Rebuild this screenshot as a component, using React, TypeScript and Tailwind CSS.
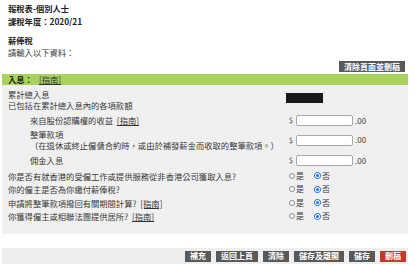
import React from "react";

const font = { fontFamily: '"Noto Sans CJK TC", "Noto Sans", sans-serif' };

function Guide() {
  return <span className="underline text-[#333]">[指南]</span>;
}

function Money() {
  return (
    <div className="flex items-center">
      <span className="w-[7px] text-[7px] leading-none">$</span>
      <div className="w-[57px] h-[11px] bg-white border border-[#a8a8a8] rounded-[2px]" />
      <span className="ml-[2px] text-[8px] leading-none">.00</span>
    </div>
  );
}

function YesNo() {
  return (
    <div className="flex items-center text-[8px] leading-none">
      <span className="w-[6px] h-[6px] rounded-full border border-[#8a8a8a] bg-white" />
      <span className="ml-[1px]">是</span>
      <span className="ml-[10px] w-[7px] h-[7px] rounded-full bg-[#1a73e8] border border-[#1a73e8] flex items-center justify-center">
        <span className="w-[3px] h-[3px] rounded-full bg-[#1a73e8] ring-1 ring-white" />
      </span>
      <span className="ml-[1px]">否</span>
    </div>
  );
}

function Btn({ children, red }: { children: React.ReactNode; red?: boolean }) {
  return (
    <div
      className={`h-[11px] px-[5px] flex items-center text-white font-bold text-[8px] leading-none ${
        red ? "bg-[#c0392b]" : "bg-[#595959]"
      }`}
    >
      {children}
    </div>
  );
}

export default function App() {
  return (
    <div className="w-[415px] h-[265px] bg-white text-[#3a3a3a] overflow-hidden" style={font}>
      <div className="pl-[8px] pt-[4px]">
        <div className="text-[8.3px] leading-[9px] font-bold text-[#222]">報稅表-個別人士</div>
        <div className="mt-[4px] text-[8.3px] leading-[9px] font-bold text-[#222]">課稅年度：2020/21</div>
        <div className="mt-[10px] text-[8.3px] leading-[9px] font-bold text-[#222]">薪俸稅</div>
        <div className="mt-[3px] text-[8.3px] leading-[9px]">請輸入以下資料：</div>
      </div>
      <div className="flex justify-end pr-[10px] mt-[4px]">
        <Btn>清除頁面並刪稿</Btn>
      </div>
      <div className="ml-[2px] w-[406px] mt-[2px]">
        <div className="h-[11px] bg-[#a8d15f] flex items-center pl-[6px] text-[8.3px] leading-none font-bold text-[#222]">
          入息：<span className="ml-[6px] font-normal"><Guide /></span>
        </div>
        <div className="bg-[#f0f0f0] pt-[4px] pb-[11px] text-[8.3px]">
          <div className="flex h-[22px]">
            <div className="flex-1 pl-[6px] leading-[11px]">
              <div>累計總入息</div>
              <div>已包括在累計總入息內的各項款額</div>
            </div>
            <div className="w-[122px]">
              <div className="mt-[4px] w-[37px] h-[10px] bg-[#1a1a1a]" />
            </div>
          </div>
          <div className="flex items-center h-[13px] mt-[3px]">
            <div className="flex-1 pl-[28px] leading-none">
              來自股份認購權的收益 <span className="ml-[2px]"><Guide /></span>
            </div>
            <div className="w-[119px]"><Money /></div>
          </div>
          <div className="flex items-center mt-[2px]">
            <div className="flex-1 pl-[28px] leading-[11px]">
              <div>整筆款項</div>
              <div>（在退休或終止僱傭合約時，或由於補發薪金而收取的整筆款項。）</div>
            </div>
            <div className="w-[119px]"><Money /></div>
          </div>
          <div className="flex items-center h-[13px] mt-[3px]">
            <div className="flex-1 pl-[28px] leading-none">佣金入息</div>
            <div className="w-[119px]"><Money /></div>
          </div>
          <div className="flex items-center h-[13.5px] mt-[2px]">
            <div className="flex-1 pl-[6px] leading-none">你是否有就香港的受僱工作或提供服務從非香港公司獲取入息?</div>
            <div className="w-[119px]"><YesNo /></div>
          </div>
          <div className="flex items-center h-[13.5px]">
            <div className="flex-1 pl-[6px] leading-none">你的僱主是否為你繳付薪俸稅?</div>
            <div className="w-[119px]"><YesNo /></div>
          </div>
          <div className="flex items-center h-[13.5px]">
            <div className="flex-1 pl-[6px] leading-none">
              申請將整筆款項撥回有關期間計算? <span className="ml-[2px]"><Guide /></span>
            </div>
            <div className="w-[119px]"><YesNo /></div>
          </div>
          <div className="flex items-center h-[13.5px]">
            <div className="flex-1 pl-[6px] leading-none">
              你獲得僱主或相聯法團提供居所? <span className="ml-[2px]"><Guide /></span>
            </div>
            <div className="w-[119px]"><YesNo /></div>
          </div>
        </div>
        <div className="mt-[14px] h-[16px] bg-[#eeeeee] flex items-center justify-end gap-[5px] pr-[2px]">
          <Btn>補充</Btn>
          <Btn>返回上頁</Btn>
          <Btn>清除</Btn>
          <Btn>儲存及離開</Btn>
          <Btn>儲存</Btn>
          <Btn red>刪稿</Btn>
        </div>
      </div>
    </div>
  );
}
